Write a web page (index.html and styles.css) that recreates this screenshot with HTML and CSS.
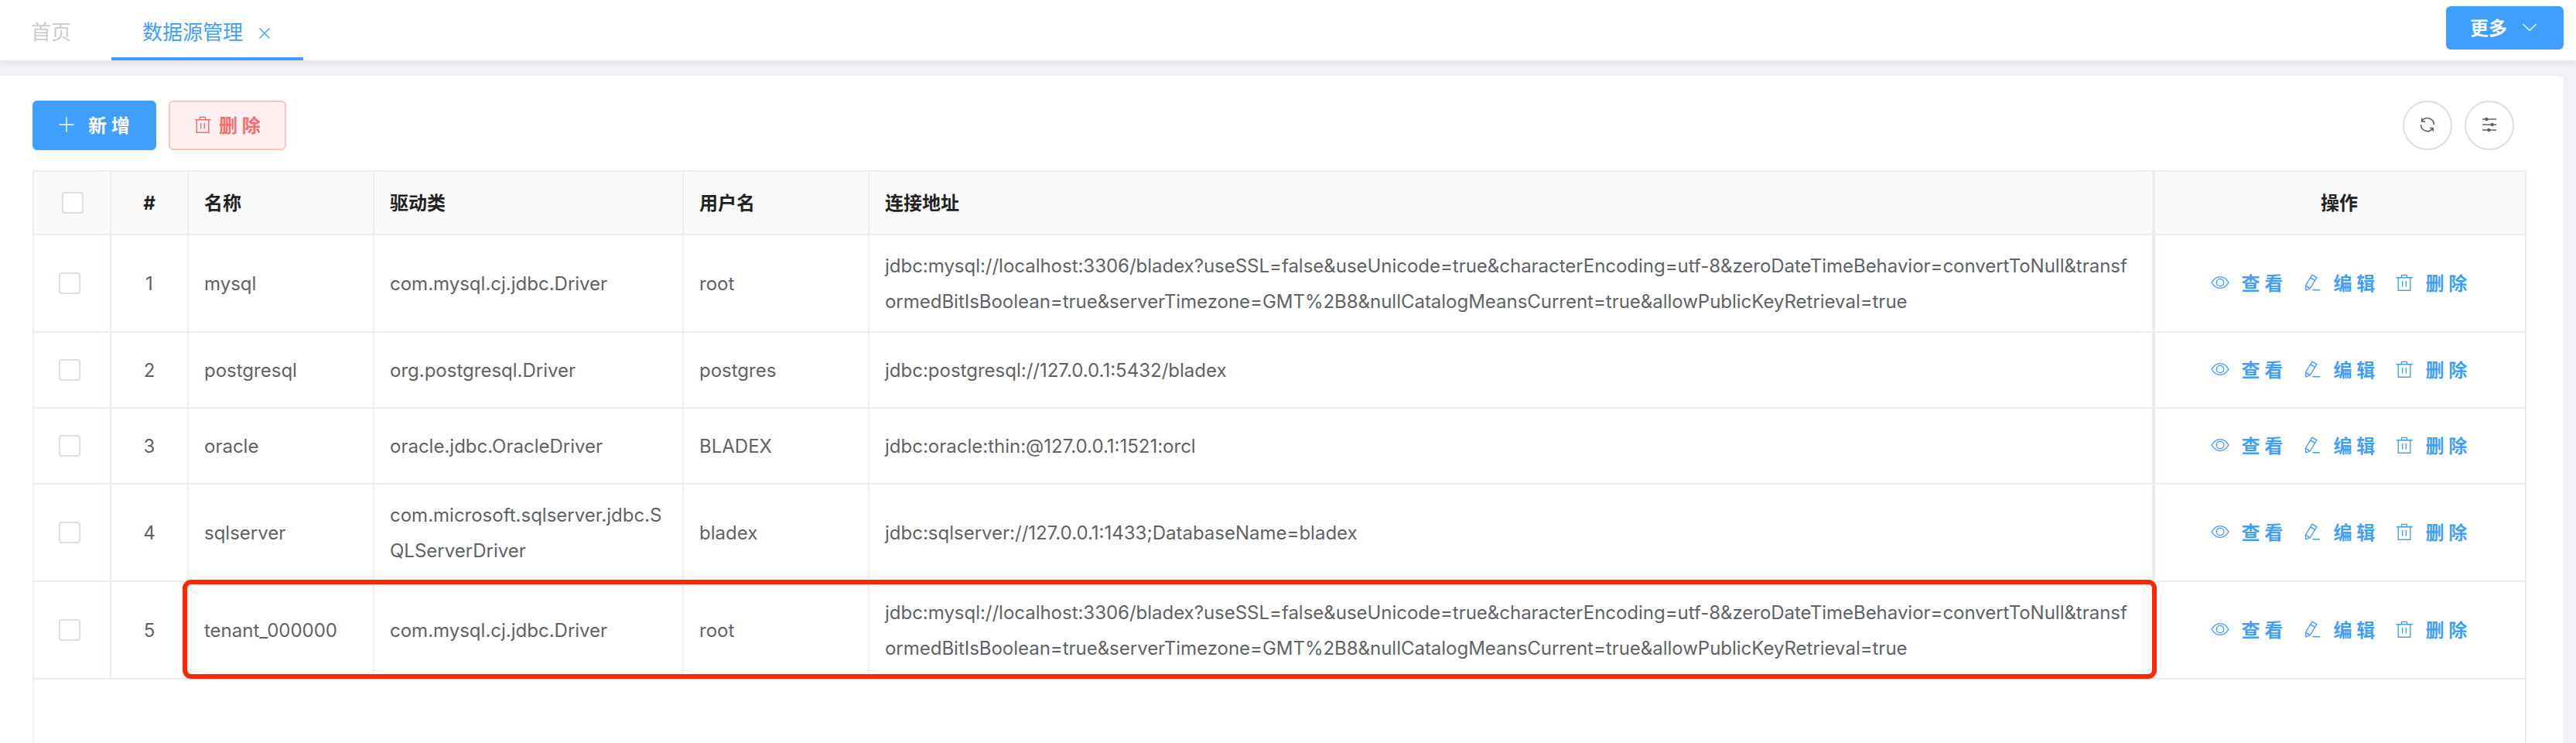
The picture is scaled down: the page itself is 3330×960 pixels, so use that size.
FILE: index.html
```
<!DOCTYPE html>
<html lang="zh-CN">
<head>
<meta charset="utf-8">
<title>数据源管理</title>
<link rel="stylesheet" href="styles.css">
</head>
<body>
<svg class="sprite" aria-hidden="true">
  <symbol id="i-view" viewBox="0 0 24 24"><path d="M1 12C4 7 7.500 4.600 12 4.600S20 7 23 12C20 17 16.500 19.400 12 19.400S4 17 1 12Z"/><circle cx="12" cy="12" r="4.700"/></symbol>
  <symbol id="i-edit" viewBox="0 0 24 24"><path d="M11.800 2.200 17.800 5.500 9.300 19.800 3.900 21.800 3.400 16.200ZM9.600 5.900 15.600 9.300M3.400 16.200 9.300 19.800M12.500 21.700H22"/></symbol>
  <symbol id="i-trash" viewBox="0 0 24 24"><path d="M2 5.700H22.500M8.500 5.500V2.400H15.500V5.500M4.200 6V22.200H19.800V6M9.700 10V17.500M14.300 10V17.500"/></symbol>
  <symbol id="i-plus" viewBox="0 0 24 24"><path d="M12 2.300V21.700M2.300 12H21.700"/></symbol>
  <symbol id="i-down" viewBox="0 0 24 24"><path d="M3.500 8.200 12 16.400 20.500 8.200"/></symbol>
  <symbol id="i-close" viewBox="0 0 24 24"><path d="M5.500 5.500 18.500 18.500M18.500 5.500 5.500 18.500"/></symbol>
  <symbol id="i-refresh" viewBox="0 0 24 24"><path d="M20.400 12A8.500 8.500 0 0 0 5 7.200M4.700 3.500V8H9M3.500 12A8.500 8.500 0 0 0 19 16.800M19.300 20.500V16.500H15"/></symbol>
  <symbol id="i-set" viewBox="0 0 24 24"><path d="M3 5H21M3 12H21M3 19H21"/><g fill="currentColor" stroke="none"><circle cx="8.300" cy="5" r="2.200"/><circle cx="15.700" cy="12" r="2.200"/><circle cx="11.300" cy="19" r="2.200"/></g></symbol>
</svg>

<header class="tabs">
  <div class="tab">首页</div>
  <div class="tab tab-active">数据源管理<svg class="icon tab-close"><use href="#i-close"/></svg></div>
  <button class="btn more">更多<svg class="icon"><use href="#i-down"/></svg></button>
</header>

<main class="card">
  <div class="toolbar">
    <button class="btn btn-primary"><svg class="icon"><use href="#i-plus"/></svg><span>新 增</span></button>
    <button class="btn btn-danger"><svg class="icon"><use href="#i-trash"/></svg><span>删 除</span></button>
    <div class="tools">
      <button class="round"><svg class="icon"><use href="#i-refresh"/></svg></button>
      <button class="round"><svg class="icon"><use href="#i-set"/></svg></button>
    </div>
  </div>

  <section class="table">
    <div class="row head">
      <div class="cell pick"><i class="box"></i></div><div class="cell num">#</div><div class="cell">名称</div><div class="cell">驱动类</div><div class="cell">用户名</div><div class="cell">连接地址</div><div class="cell ops">操作</div>
    </div>
    <div class="row tall">
      <div class="cell pick"><i class="box"></i></div><div class="cell num">1</div><div class="cell">mysql</div><div class="cell">com.mysql.cj.jdbc.Driver</div><div class="cell">root</div>
      <div class="cell url">jdbc:mysql://localhost:3306/bladex?useSSL=false&amp;useUnicode=true&amp;characterEncoding=utf-8&amp;zeroDateTimeBehavior=convertToNull&amp;transf<br>ormedBitIsBoolean=true&amp;serverTimezone=GMT%2B8&amp;nullCatalogMeansCurrent=true&amp;allowPublicKeyRetrieval=true</div>
      <div class="cell ops"><a class="op"><svg class="icon"><use href="#i-view"/></svg>查 看</a><a class="op"><svg class="icon"><use href="#i-edit"/></svg>编 辑</a><a class="op"><svg class="icon"><use href="#i-trash"/></svg>删 除</a></div>
    </div>
    <div class="row">
      <div class="cell pick"><i class="box"></i></div><div class="cell num">2</div><div class="cell">postgresql</div><div class="cell">org.postgresql.Driver</div><div class="cell">postgres</div>
      <div class="cell">jdbc:postgresql://127.0.0.1:5432/bladex</div>
      <div class="cell ops"><a class="op"><svg class="icon"><use href="#i-view"/></svg>查 看</a><a class="op"><svg class="icon"><use href="#i-edit"/></svg>编 辑</a><a class="op"><svg class="icon"><use href="#i-trash"/></svg>删 除</a></div>
    </div>
    <div class="row">
      <div class="cell pick"><i class="box"></i></div><div class="cell num">3</div><div class="cell">oracle</div><div class="cell">oracle.jdbc.OracleDriver</div><div class="cell">BLADEX</div>
      <div class="cell">jdbc:oracle:thin:@127.0.0.1:1521:orcl</div>
      <div class="cell ops"><a class="op"><svg class="icon"><use href="#i-view"/></svg>查 看</a><a class="op"><svg class="icon"><use href="#i-edit"/></svg>编 辑</a><a class="op"><svg class="icon"><use href="#i-trash"/></svg>删 除</a></div>
    </div>
    <div class="row tall">
      <div class="cell pick"><i class="box"></i></div><div class="cell num">4</div><div class="cell">sqlserver</div><div class="cell">com.microsoft.sqlserver.jdbc.S<br>QLServerDriver</div><div class="cell">bladex</div>
      <div class="cell">jdbc:sqlserver://127.0.0.1:1433;DatabaseName=bladex</div>
      <div class="cell ops"><a class="op"><svg class="icon"><use href="#i-view"/></svg>查 看</a><a class="op"><svg class="icon"><use href="#i-edit"/></svg>编 辑</a><a class="op"><svg class="icon"><use href="#i-trash"/></svg>删 除</a></div>
    </div>
    <div class="row tall marked">
      <div class="cell pick"><i class="box"></i></div><div class="cell num">5</div><div class="cell">tenant_000000</div><div class="cell">com.mysql.cj.jdbc.Driver</div><div class="cell">root</div>
      <div class="cell url">jdbc:mysql://localhost:3306/bladex?useSSL=false&amp;useUnicode=true&amp;characterEncoding=utf-8&amp;zeroDateTimeBehavior=convertToNull&amp;transf<br>ormedBitIsBoolean=true&amp;serverTimezone=GMT%2B8&amp;nullCatalogMeansCurrent=true&amp;allowPublicKeyRetrieval=true</div>
      <div class="cell ops"><a class="op"><svg class="icon"><use href="#i-view"/></svg>查 看</a><a class="op"><svg class="icon"><use href="#i-edit"/></svg>编 辑</a><a class="op"><svg class="icon"><use href="#i-trash"/></svg>删 除</a></div>
      <div class="highlight"></div>
    </div>
  </section>
</main>
</body>
</html>
```
FILE: styles.css
```
* { box-sizing: border-box; }

body {
  margin: 0;
  height: 960px;
  overflow: hidden;
  display: flex;
  flex-direction: column;
  gap: 20px;
  background: #f0f2f5;
  color: #606266;
  font: 24px/46px Inter, "Noto Sans CJK SC", sans-serif;
}

.sprite { position: absolute; width: 0; height: 0; }

.icon {
  width: 24px;
  height: 24px;
  flex: none;
  fill: none;
  stroke: currentColor;
  stroke-width: 1.4;
}

/* Tab bar */
.tabs {
  flex: none;
  display: flex;
  align-items: flex-start;
  height: 78px;
  padding-right: 16px;
  background: #fff;
  box-shadow: 0 2px 8px rgba(0, 0, 0, .08);
  font-size: 26px;
}

.tab {
  display: flex;
  align-items: center;
  height: 78px;
  padding: 6px 52px 0 40px;
  color: #ccc;
}

.tab-active {
  width: 248px;
  padding: 10px 0 0 40px;
  color: #409eff;
  border-bottom: 4px solid #409eff;
}

.tab-close { margin: 2px 0 0 16px; }

.btn {
  display: flex;
  align-items: center;
  height: 64px;
  border: 2px solid #409eff;
  border-radius: 6px;
  background: #409eff;
  color: #fff;
  font: 700 24px/30px Inter, "Noto Sans CJK SC", sans-serif;
  white-space: pre;
}

.btn .icon { margin-top: -4px; }

.more {
  width: 152px;
  height: 56px;
  margin: 8px 0 0 auto;
  padding: 2px 0 0 29px;
  gap: 17px;
}

/* Content card */
.card {
  flex: 1;
  min-height: 0;
  display: flex;
  flex-direction: column;
  gap: 26px;
  margin-right: 16px;
  padding: 32px 48px 0 42px;
  background: #fff;
  border-radius: 0 8px 0 0;
}

.toolbar { display: flex; gap: 16px; }

.btn-primary { width: 160px; padding: 2px 0 0 30px; gap: 16px; }

.btn-danger {
  width: 152px;
  padding: 2px 0 0 30px;
  gap: 9px;
  background: #fef0f0;
  border-color: #fbc4c4;
  color: #f56c6c;
}

.tools { display: flex; gap: 16px; margin: 0 16px 0 auto; }

.round {
  display: grid;
  place-items: center;
  width: 64px;
  height: 64px;
  padding: 0 0 2px;
  border: 2px solid #dcdfe6;
  border-radius: 50%;
  background: #fff;
  color: #606266;
}

.round .icon { stroke-width: 1.6; }

/* Data table */
.table {
  flex: 1;
  width: 3224px;
  border: 2px solid #ebeef5;
  border-bottom: 0;
}

.row {
  display: grid;
  grid-template-columns: 100px 100px 240px 400px 240px 1660px 480px;
  height: 98px;
  border-bottom: 2px solid #ebeef5;
}

.row.tall { height: 126px; }

.cell {
  display: flex;
  align-items: center;
  padding: 2px 0 0 20px;
  border-right: 2px solid #ebeef5;
  white-space: nowrap;
}

.cell.url { letter-spacing: -.02px; }

.cell.num { justify-content: center; padding: 2px 0 0; }

.cell.pick { padding: 0 0 0 32px; }

.cell.ops {
  justify-content: center;
  gap: 24px;
  padding: 2px 2px 0 0;
  border-right: 0;
  border-left: 2px solid #ebeef5;
}

.head {
  height: 82px;
  background: #fafafa;
  color: #222;
  font-weight: 700;
}

.head .pick { padding-left: 36px; }

.box {
  width: 28px;
  height: 28px;
  border: 2px solid #dcdfe6;
  border-radius: 4px;
  background: #fff;
}

.op {
  display: flex;
  align-items: center;
  gap: 16px;
  width: 95px;
  color: #409eff;
  font-weight: 700;
}

.op .icon { margin-top: -4px; }

.marked { position: relative; }

/* Annotation frame laid over the fifth row */
.highlight {
  position: absolute;
  top: -3px;
  left: 192px;
  width: 2552px;
  height: 128px;
  border: 6px solid #ff2600;
  border-radius: 11px;
}
```
